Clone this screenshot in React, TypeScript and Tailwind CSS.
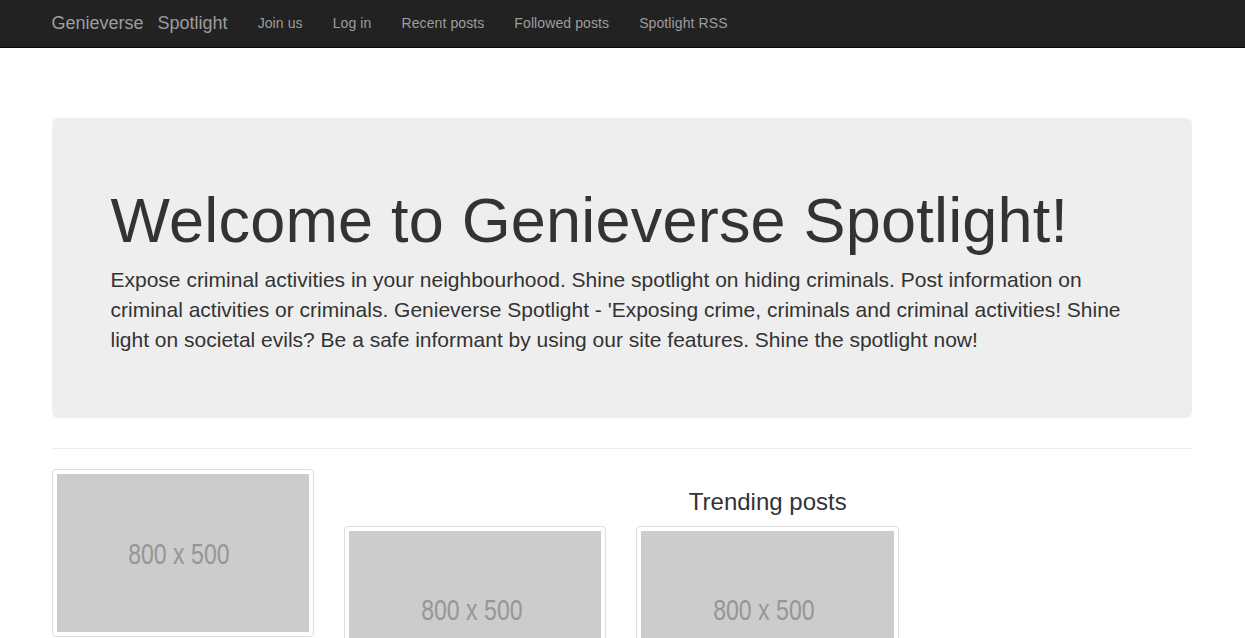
import React from 'react';

const navLinks = ['Join us', 'Log in', 'Recent posts', 'Followed posts', 'Spotlight RSS'];

function Placeholder() {
  return (
    <div className="p-[4px] border border-[#ddd] rounded-[4px] bg-white mb-[20px]">
      <div className="aspect-[8/5] bg-[#ccc] flex items-center justify-center overflow-hidden pr-[7px] pt-[1px]">
        <span className="text-[30px] text-[#969696] whitespace-nowrap scale-x-[0.77] leading-none">800 x 500</span>
      </div>
    </div>
  );
}

export default function App() {
  return (
    <div className="min-h-screen bg-white text-[#333] text-[14px] font-['Liberation_Sans',Arial,sans-serif]">
      {/* Navbar */}
      <nav className="bg-[#222] border-b border-[#080808]">
        <div className="w-[1170px] mx-auto px-[14px] flex h-[47px] items-center">
          <a className="-ml-[15px] px-[15px] text-[18px] text-[#9d9d9d] flex items-center">
            <span>Genieverse</span>
            <span className="ml-[14px]">Spotlight</span>
          </a>
          <ul className="flex items-center">
            {navLinks.map((l) => (
              <li key={l} className="px-[15px] text-[#9d9d9d] tracking-[0.1px]">
                {l}
              </li>
            ))}
          </ul>
        </div>
      </nav>

      <div className="w-[1170px] mx-auto pl-[14px] pr-[16px] pt-[70px]">
        {/* Jumbotron */}
        <div className="bg-[#eee] rounded-[6px] px-[59px] py-[48px] mb-[30px]">
          <h1 className="text-[63px] leading-[1.1] mt-[20px] mb-[10px] tracking-[0.2px]">Welcome to Genieverse Spotlight!</h1>
          <p className="text-[21px] leading-[30px] mb-[15px]">
            Expose criminal activities in your neighbourhood. Shine spotlight on hiding criminals. Post information on
            criminal activities or criminals. Genieverse Spotlight - 'Exposing crime, criminals and criminal activities! Shine
            light on societal evils? Be a safe informant by using our site features. Shine the spotlight now!
          </p>
        </div>

        <hr className="border-0 border-t border-[#eee] mb-[20px]" />

        <div className="flex -mx-[15px]">
          <div className="w-1/4 px-[15px]">
            <Placeholder />
          </div>
          <div className="w-3/4 px-[15px]">
            <h3 className="text-[24px] leading-[1.1] mt-[20px] mb-[10px] text-center">Trending posts</h3>
            <div className="flex -mx-[15px]">
              <div className="w-1/3 px-[15px]">
                <Placeholder />
              </div>
              <div className="w-1/3 px-[15px]">
                <Placeholder />
              </div>
            </div>
          </div>
        </div>
      </div>
    </div>
  );
}
